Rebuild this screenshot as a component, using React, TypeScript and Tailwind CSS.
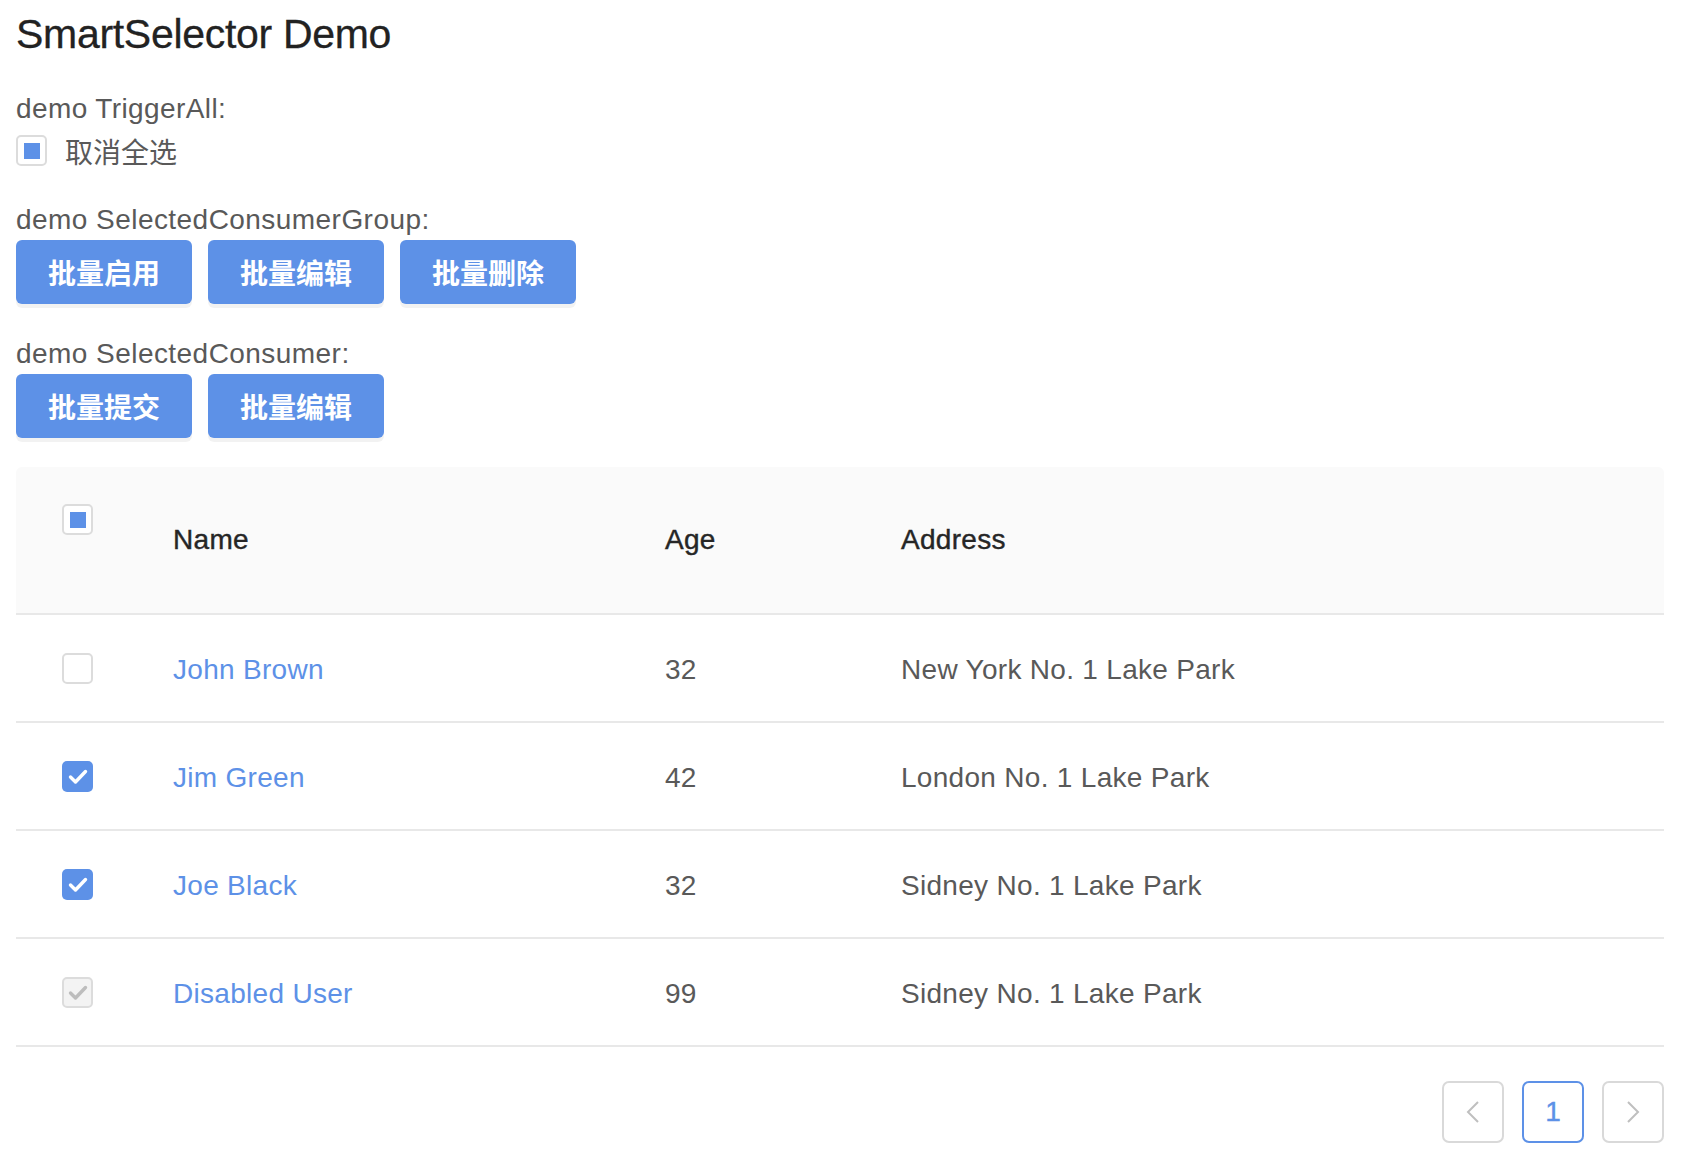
import React from "react";

function Check({ color, offset }: { color: string; offset?: boolean }) {
  return (
    <svg
      width="31"
      height="31"
      viewBox="0 0 31 31"
      className={offset ? "absolute left-[-2px] top-[-2px]" : "absolute inset-0"}
    >
      <polyline
        points="8.5,16 13.5,21 23.5,10.5"
        fill="none"
        stroke={color}
        strokeWidth="3.4"
        strokeLinecap="round"
        strokeLinejoin="round"
      />
    </svg>
  );
}

function Box({ state }: { state: "empty" | "checked" | "indeterminate" | "disabled" }) {
  if (state === "checked") {
    return (
      <div className="relative w-[31px] h-[31px] rounded-[5px] bg-[#5d91e7] shrink-0">
        <Check color="#ffffff" />
      </div>
    );
  }
  if (state === "disabled") {
    return (
      <div className="relative w-[31px] h-[31px] rounded-[5px] border-2 border-[#dcdcdc] bg-[#f3f3f3] shrink-0">
        <Check color="#bdbdbd" offset />
      </div>
    );
  }
  return (
    <div className="w-[31px] h-[31px] rounded-[5px] border-2 border-[#dcdcdc] bg-white flex items-center justify-center shrink-0">
      {state === "indeterminate" && <div className="w-[16px] h-[16px] bg-[#5d91e7]" />}
    </div>
  );
}

function Btn({ children }: { children: React.ReactNode }) {
  return (
    <button className="w-[176px] h-[64px] rounded-[6px] bg-[#5d91e7] text-white text-[28px] font-bold leading-none shadow-[0_4px_0_rgba(0,0,0,0.05)] font-['Noto_Sans_CJK_SC',sans-serif]">
      {children}
    </button>
  );
}

const rows = [
  { name: "John Brown", age: 32, address: "New York No. 1 Lake Park", state: "empty" as const },
  { name: "Jim Green", age: 42, address: "London No. 1 Lake Park", state: "checked" as const },
  { name: "Joe Black", age: 32, address: "Sidney No. 1 Lake Park", state: "checked" as const },
  { name: "Disabled User", age: 99, address: "Sidney No. 1 Lake Park", state: "disabled" as const },
];

export default function App() {
  return (
    <div className="w-[1694px] min-h-[1164px] bg-white px-[16px] pt-[10px] font-['Liberation_Sans','Noto_Sans_CJK_SC',sans-serif] text-[#595959]">
      <h1 className="text-[41px] leading-[48px] tracking-[-0.3px] text-[#222] m-0 [-webkit-text-stroke:0.3px_#222]">
        SmartSelector Demo
      </h1>

      <div className="mt-[33px] text-[28px] leading-[36px] tracking-[0.4px]">demo TriggerAll:</div>
      <div className="mt-[8px] h-[31px] flex items-center gap-[18px]">
        <Box state="indeterminate" />
        <span className="text-[28px] leading-none text-[#595959] font-['Noto_Sans_CJK_SC',sans-serif]">取消全选</span>
      </div>

      <div className="mt-[36px] text-[28px] leading-[36px] tracking-[0.45px]">demo SelectedConsumerGroup:</div>
      <div className="mt-[2px] flex gap-[16px]">
        <Btn>批量启用</Btn>
        <Btn>批量编辑</Btn>
        <Btn>批量删除</Btn>
      </div>

      <div className="mt-[32px] text-[28px] leading-[36px] tracking-[0.45px]">demo SelectedConsumer:</div>
      <div className="mt-[2px] flex gap-[16px]">
        <Btn>批量提交</Btn>
        <Btn>批量编辑</Btn>
      </div>

      <div className="mt-[29px] w-[1648px]">
        <div className="grid grid-cols-[157px_492px_236px_1fr] h-[148px] bg-[#fafafa] rounded-t-[6px] border-b-2 border-[#e8e8e8] text-[28px] tracking-[0.3px] text-[#262626] [-webkit-text-stroke:0.4px_#262626]">
          <div className="pl-[46px] pt-[37px]">
            <Box state="indeterminate" />
          </div>
          <div className="flex items-center">Name</div>
          <div className="flex items-center">Age</div>
          <div className="flex items-center">Address</div>
        </div>
        {rows.map((r) => (
          <div
            key={r.name}
            className="grid grid-cols-[157px_492px_236px_1fr] h-[108px] border-b-2 border-[#e8e8e8] text-[28px] tracking-[0.3px] items-center"
          >
            <div className="pl-[46px] flex items-center">
              <Box state={r.state} />
            </div>
            <div className="text-[#5d91e7] pt-[3px]">{r.name}</div>
            <div className="pt-[3px]">{r.age}</div>
            <div className="pt-[3px]">{r.address}</div>
          </div>
        ))}
      </div>

      <div className="mt-[34px] w-[1648px] flex justify-end gap-[18px]">
        <div className="w-[62px] h-[62px] rounded-[7px] border-2 border-[#d9d9d9] flex items-center justify-center">
          <svg width="14" height="22" viewBox="0 0 14 22">
            <polyline points="12,1 2,11 12,21" fill="none" stroke="#bfbfbf" strokeWidth="2" />
          </svg>
        </div>
        <div className="w-[62px] h-[62px] rounded-[7px] border-2 border-[#5d91e7] flex items-center justify-center text-[28px] text-[#5d91e7] [-webkit-text-stroke:0.4px_#5d91e7]">
          1
        </div>
        <div className="w-[62px] h-[62px] rounded-[7px] border-2 border-[#d9d9d9] flex items-center justify-center">
          <svg width="14" height="22" viewBox="0 0 14 22">
            <polyline points="2,1 12,11 2,21" fill="none" stroke="#bfbfbf" strokeWidth="2" />
          </svg>
        </div>
      </div>
    </div>
  );
}
